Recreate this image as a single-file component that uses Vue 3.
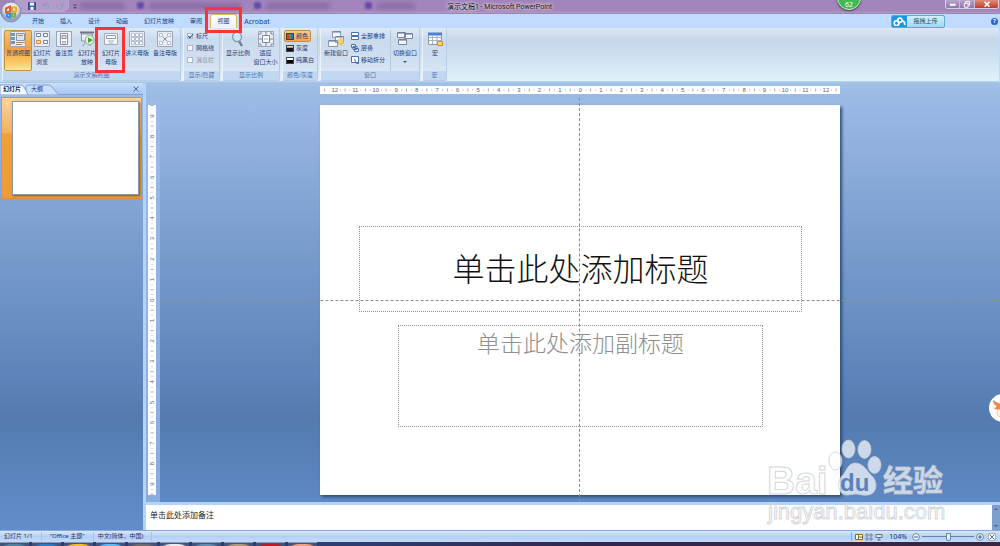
<script setup>
import { ref } from 'vue'

const tabs = ['开始', '插入', '设计', '动画', '幻灯片放映', '审阅', '视图', 'Acrobat']
const activeTab = ref('视图')

const G = '#8793a8'
const frame = { d: 'M.5.5h15v15H.5z', f: '#e9edf3', s: '#9aa5b8' }
const icons = {
  normal: [
    frame,
    { d: 'M1 2h4v3H1zM1 6h4v3H1zM1 10h4v3H1z', f: '#7d93b4' },
    { d: 'M6.5 2.5h8v7h-8z', f: '#dde3ec', s: '#8a93a4' },
    { d: 'M8 4.5h5M6 11.5h9M6 13.5h6', s: '#b0895c' },
  ],
  sorter: [
    frame,
    { d: 'M2.5 2.5h4v3h-4zM9.5 2.5h4v3h-4zM9.5 9.5h4v3h-4z', f: '#fff', s: '#6f84a6' },
    { d: 'M2.5 9.5h4v3h-4z', f: '#fbe0b2', s: '#d98d35' },
  ],
  notes: [
    frame,
    { d: 'M4.5 2.5h7v11h-7z', f: '#fff', s: G },
    { d: 'M6 4.5h4v3H6z', f: '#dce3ee', s: G },
    { d: 'M6 10.5h4M6 12h4', s: '#9aa5b6' },
  ],
  show: [
    { d: 'M1 1.5h14', s: '#6b7585', w: 2 },
    { d: 'M2.5 3h11v7h-11zM7 10l-3 5M8 10l3 5', f: '#eef1f6', s: '#8c95a3' },
    { d: 'M10.500 4.500a4.500 4.500 0 1 0 .1 0z', f: '#e5f0e1', s: '#8ba28a' },
    { d: 'M9 6.500l5 2.500-5 3z', f: '#38a835' },
  ],
  master: [
    { d: 'M1.500 2.500h13v11h-13z', f: '#f2f4f8', s: '#a4acba' },
    { d: 'M3.500 4.500h9v3h-9z', f: '#fff', s: '#8d9bb3' },
    { d: 'M5 10h6M6 12h4', s: '#a9b2c1' },
  ],
  handout: [
    frame,
    { d: 'M2.500 2.500h3v3h-3zM6.500 2.500h3v3h-3zM10.500 2.500h3v3h-3zM2.500 6.500h3v3h-3zM6.500 6.500h3v3h-3zM10.500 6.500h3v3h-3zM2.500 10.500h3v3h-3zM6.500 10.500h3v3h-3zM10.500 10.500h3v3h-3z', f: '#fff', s: '#b4bdcb' },
  ],
  notesMaster: [
    frame,
    { d: 'M2.500 2.500h3v3h-3zM10.500 2.500h3v3h-3zM2.500 10.500h3v3h-3zM10.500 10.500h3v3h-3z', f: '#fff', s: '#b4bdcb' },
    { d: 'M6 6l4 4M10 6l-4 4', s: '#8491a6' },
  ],
  zoom: [
    { d: 'M9 10l3 5', s: '#707c92', w: 2.4 },
    { d: 'M7 1a4.500 4.800 0 1 0 .1 0z', f: '#cfe4f8', s: '#8796ae', w: 1.3 },
    { d: 'M5 4q1-2 3-1', s: '#fff' },
  ],
  fit: [
    frame,
    { d: 'M4.500 4.500h7v7h-7z', f: '#fff', s: '#7a879d' },
    { d: 'M8 1v3M8 12v3M1 8h3M12 8h3M2 4V2h2M12 2h2v2M14 12v2h-2M4 14H2v-2', s: '#7a879d' },
    { d: 'M6 8h4', s: '#9fadc4' },
  ],
  newWindow: [
    { d: 'M4.500.500h8v6h-8z', f: '#f7f9fc', s: '#8c97a8' },
    { d: 'M4.500 1h8M7 6h8', s: '#5479b2' },
    { d: 'M7.500 5.500h8v6h-8zM.500 9.500h9v6H.500z', f: '#f7f9fc', s: '#8c97a8' },
    { d: 'M1 10h8M8 6h7', s: '#5479b2' },
    { d: 'M13 6.500l1 2.500 2-.5-1 2 1 2-2-.5-1 2.500-1-2.500-2 .5 1-2-1-2 2 .5z', f: '#ffd75a', s: '#e0a52c', w: .5 },
  ],
  switchWindow: [
    { d: 'M.500 1.500h8v5h-8zM7.500 2.500h8v5h-8zM1.500 8.500h8v5h-8z', f: '#f5f7fb', s: '#78869c' },
    { d: 'M1 2h7M8 3h7M2 9h7', s: '#5d7296' },
  ],
  macro: [
    { d: 'M1.500 2.500h13v11h-13z', f: '#f7f9fc', s: '#8c97a8' },
    { d: 'M1 3h14', s: '#4f7fd0', w: 3 },
    { d: 'M2 6.500h12M2 9.500h12M5.500 5v8M10 5v8', s: '#a8b2c4' },
    { d: 'M10.500 10.500h5v4h-5z', f: '#ffd36b', s: '#c69227' },
  ],
}

const viewButtons = [
  { icon: 'normal', lines: ['普通视图'], on: true },
  { icon: 'sorter', lines: ['幻灯片', '浏览'] },
  { icon: 'notes', lines: ['备注页'] },
  { icon: 'show', lines: ['幻灯片', '放映'] },
  { icon: 'master', lines: ['幻灯片', '母版'], marked: true },
  { icon: 'handout', lines: ['讲义母版'] },
  { icon: 'notesMaster', lines: ['备注母版'] },
]
const zoomButtons = [
  { icon: 'zoom', lines: ['显示比例'] },
  { icon: 'fit', lines: ['适应', '窗口大小'] },
]
const checks = [
  { id: 'ruler', label: '标尺', on: true },
  { id: 'grid', label: '网格线' },
  { id: 'messages', label: '消息栏', off: true },
]
const modes = [
  { id: 'color', label: '颜色' },
  { id: 'gray', label: '灰度' },
  { id: 'mono', label: '纯黑白' },
]
const arrange = [
  { label: '全部重排', d: 'M.5.5h7v3h-7zM.5 4.500h7v3h-7z' },
  { label: '层叠', d: 'M.5.5h4v3h-4zM2 2.500h4v3H2zM3.500 4.500h4v3h-4z' },
  { label: '移动拆分', d: 'M.5.5h7v6h-7zM3.500 3l2 4.500M5.500 7.500h2v-2' },
]

const STEP = 20.5
const hMarks = Array.from({ length: 25 }, (_, i) => ({ n: Math.abs(i - 12), at: 260.5 + (i - 12) * STEP }))
const vMarks = Array.from({ length: 19 }, (_, i) => ({ n: Math.abs(i - 9), at: 195.5 + (i - 9) * STEP }))
const notes = ref('单击此处添加备注')
const zoom = ref(50)
const tasks = ['#51809f', '#2b7cc4', '#f2bc2d', '#5ebcf2', '#6d6b70', '#e8ecef', '#648bb0', '#b19a77', '#c31722', '#f2a083']
</script>

<template>
  <div class="app">
    <header class="titlebar">
      <div class="quick">
        <button class="qbtn" aria-label="保存">
          <svg viewBox="0 0 8 8"><path d="M.5.5h7v7h-7z" fill="#4a63b5" stroke="#334790" /><path d="M2 .5h4v3H2zM2.500 5h3v3h-3z" fill="#f2f5fc" /></svg>
        </button>
        <button class="qbtn dim" aria-label="撤消">
          <svg viewBox="0 0 8 8"><path d="M1 1v3h3M1 4q2-3 5-1.500Q8 5 5 7" fill="none" stroke="#8292bd" /></svg>
        </button>
        <button class="qbtn dim" aria-label="恢复">
          <svg viewBox="0 0 8 8"><path d="M7 0v3H4M6.500 3Q7 7 3.500 7 0 6 1 2" fill="none" stroke="#8292bd" /></svg>
        </button>
      </div>
      <button class="more" aria-label="自定义"><svg viewBox="0 0 6 6"><path d="M1 1h4" stroke="#514772" /><path d="M1 3h4L3 5z" fill="#514772" /></svg></button>
      <div class="behind"><i class="smear a"></i><i class="dot"></i><i class="smear b"></i><i class="dot"></i><i class="smear c"></i><i class="dot"></i><i class="smear d"></i></div>
      <h1>演示文稿1 - Microsoft PowerPoint</h1>
      <span class="badge">62</span>
      <div class="window-buttons">
        <button aria-label="最小化"><svg viewBox="0 0 14 9"><path d="M4 5h6" stroke="#fff" stroke-width="2" /></svg></button>
        <button aria-label="还原"><svg viewBox="0 0 14 9"><path d="M4.500 3.500h4v4h-4zM6 3V1.500h4v4H9" fill="none" stroke="#fff" /></svg></button>
        <button class="close" aria-label="关闭"><svg viewBox="0 0 24 9"><path d="M10 2l5 5M15 2l-5 5" stroke="#fff" stroke-width="1.700" /></svg></button>
      </div>
    </header>

    <button class="office" aria-label="Office">
      <svg viewBox="0 0 22 22">
        <defs><radialGradient id="orb" cy=".35"><stop offset="0" stop-color="#fff" /><stop offset=".7" stop-color="#dce0ea" /><stop offset="1" stop-color="#98a3bd" /></radialGradient></defs>
        <circle cx="11" cy="11" r="10" fill="url(#orb)" stroke="#8590b0" />
        <g fill="none" stroke-width="2">
          <path d="M6 7.500l4-2v5l-4 1z" stroke="#e5601f" />
          <path d="M12 6.500h4v4h-4z" stroke="#f3a42c" />
          <path d="M7 13l3-.5v4l-3-1z" stroke="#4d8bd6" />
          <path d="M12 12.500h3v3h-3z" stroke="#72b43c" />
        </g>
      </svg>
    </button>

    <nav class="tabs">
      <button v-for="t in tabs" :key="t" :class="['tab', { active: t === activeTab }]" @click="activeTab = t">{{ t }}</button>
      <div class="tab-tools">
        <button class="upload"><span class="cloud"><svg viewBox="0 0 12 9"><g fill="none" stroke="#fff" stroke-width="1.500"><circle cx="3.300" cy="5.700" r="2.200" /><circle cx="6.300" cy="3" r="2" /><path d="M8.300 3.500q3 .5 2.500 4" /></g></svg></span><span class="upload-text">拖拽上传</span></button>
        <button class="help" aria-label="帮助">?</button>
      </div>
    </nav>

    <section class="ribbon">
      <div class="group">
        <div class="body views">
          <button v-for="b in viewButtons" :key="b.lines[0] + b.icon" :class="['big', { on: b.on, marked: b.marked }]">
            <svg viewBox="0 0 16 16"><path v-for="(p, i) in icons[b.icon]" :key="i" :d="p.d" :fill="p.f || 'none'" :stroke="p.s || 'none'" :stroke-width="p.w || 1" /></svg>
            <span v-for="l in b.lines" :key="l">{{ l }}</span>
          </button>
        </div>
        <div class="caption">演示文稿视图</div>
      </div>
      <div class="group">
        <div class="body stack checks">
          <label v-for="c in checks" :key="c.id" :class="{ off: c.off }" :for="c.id"><input :id="c.id" type="checkbox" :checked="c.on" :disabled="c.off">{{ c.label }}</label>
        </div>
        <div class="caption">显示/隐藏</div>
      </div>
      <div class="group">
        <div class="body zooms">
          <button v-for="b in zoomButtons" :key="b.icon" class="big">
            <svg viewBox="0 0 16 16"><path v-for="(p, i) in icons[b.icon]" :key="i" :d="p.d" :fill="p.f || 'none'" :stroke="p.s || 'none'" :stroke-width="p.w || 1" /></svg>
            <span v-for="l in b.lines" :key="l">{{ l }}</span>
          </button>
        </div>
        <div class="caption">显示比例</div>
      </div>
      <div class="group">
        <div class="body stack modes">
          <button v-for="m in modes" :key="m.id" :class="['small', { on: m.id === 'color' }]"><i :class="['swatch', m.id]"></i>{{ m.label }}</button>
        </div>
        <div class="caption">颜色/灰度</div>
      </div>
      <div class="group">
        <div class="body windows">
          <button class="big">
            <svg viewBox="0 0 16 16"><path v-for="(p, i) in icons.newWindow" :key="i" :d="p.d" :fill="p.f || 'none'" :stroke="p.s || 'none'" :stroke-width="p.w || 1" /></svg>
            <span>新建窗口</span>
          </button>
          <div class="stack arrange">
            <button v-for="a in arrange" :key="a.label" class="small"><svg viewBox="0 0 8 8"><path :d="a.d" fill="#fff" stroke="#4b71b4" /></svg>{{ a.label }}</button>
          </div>
          <button class="big drop">
            <svg viewBox="0 0 16 16"><path v-for="(p, i) in icons.switchWindow" :key="i" :d="p.d" :fill="p.f || 'none'" :stroke="p.s || 'none'" /></svg>
            <span>切换窗口</span>
            <i class="caret"></i>
          </button>
        </div>
        <div class="caption">窗口</div>
      </div>
      <div class="group">
        <div class="body macros">
          <button class="big">
            <svg viewBox="0 0 16 16"><path v-for="(p, i) in icons.macro" :key="i" :d="p.d" :fill="p.f || 'none'" :stroke="p.s || 'none'" :stroke-width="p.w || 1" /></svg>
            <span>宏</span>
          </button>
        </div>
        <div class="caption">宏</div>
      </div>
    </section>

    <main class="work">
      <aside class="pane">
        <div class="pane-tabs">
          <svg class="pane-shape" viewBox="0 0 60 11"><path d="M26 11V3q0-2 2-2h22l9 10z" fill="#cbdffa" stroke="#7fa2d6" /><path d="M0 11V1h21q3 0 7 10z" fill="#f4f9ff" stroke="#7fa2d6" /></svg>
          <button class="ptab on">幻灯片</button>
          <button class="ptab">大纲</button>
          <button class="pclose" aria-label="关闭窗格"><svg viewBox="0 0 6 6"><path d="M.5.5l5 5M5.500.5l-5 5" stroke="#3f6db0" /></svg></button>
        </div>
        <div class="thumb"><span>1</span><div class="mini"></div></div>
      </aside>

      <div class="editor">
        <div class="hruler">
          <svg viewBox="0 0 521 8">
            <g v-for="m in hMarks" :key="m.at">
              <text :x="m.at" y="6">{{ m.n }}</text>
              <path :d="`M${m.at + 10.25} 2.500v3`" />
              <path :d="`M${m.at + 5.5} 3.500v1M${m.at + 15} 3.500v1`" />
            </g>
            <path d="M4.200 2.500v3" />
          </svg>
        </div>
        <div class="vruler">
          <svg viewBox="0 0 8 391">
            <g v-for="m in vMarks" :key="m.at">
              <text :transform="`translate(6 ${m.at}) rotate(-90)`">{{ m.n }}</text>
              <path :d="`M2.500 ${m.at + 10.25}h3`" />
              <path :d="`M3.500 ${m.at + 5.5}h1M3.500 ${m.at + 15}h1`" />
            </g>
            <path d="M2.500 .5h3" />
          </svg>
        </div>
        <div class="stage">
          <div class="slide">
            <div class="holder title">单击此处添加标题</div>
            <div class="holder subtitle">单击此处添加副标题</div>
          </div>
          <i class="guide-h"></i>
          <i class="guide-v"></i>
        </div>
        <div class="notes">
          <textarea v-model="notes" aria-label="备注"></textarea>
          <div class="scroll"><svg viewBox="0 0 8 8"><path d="M2 5l2-2 2 2z" fill="#46659b" /></svg><svg viewBox="0 0 8 8"><path d="M2 3l2 2 2-2z" fill="#46659b" /></svg></div>
        </div>
      </div>
    </main>

    <footer class="status">
      <span>幻灯片 1/1</span><span>"Office 主题"</span><span>中文(简体，中国)</span>
      <div class="status-right">
        <button class="vbtn on" aria-label="普通视图"><svg viewBox="0 0 8 8"><path d="M.5 1.500h7v5h-7zM3.500 1v5M4 4h3" fill="#fff" stroke="#8a6a34" /></svg></button>
        <button class="vbtn" aria-label="浏览视图"><svg viewBox="0 0 8 8"><path d="M1 1h2v2H1zM5 1h2v2H5zM1 5h2v2H1zM5 5h2v2H5z" fill="#fff" stroke="#6b7d9e" /></svg></button>
        <button class="vbtn" aria-label="放映"><svg viewBox="0 0 8 8"><path d="M1 1.500h6v3H1zM4 5v2M2.500 7h3" fill="#dfe6f2" stroke="#65728b" /></svg></button>
        <span class="pct">104%</span>
        <button class="round" aria-label="缩小"><svg viewBox="0 0 8 8"><circle cx="4" cy="4" r="3.400" fill="#f2f7ff" stroke="#6582b5" /><path d="M2 4h4" stroke="#3d5b94" /></svg></button>
        <input v-model="zoom" type="range" aria-label="显示比例">
        <button class="round" aria-label="放大"><svg viewBox="0 0 8 8"><circle cx="4" cy="4" r="3.400" fill="#f2f7ff" stroke="#6582b5" /><path d="M2 4h4M4 2v4" stroke="#3d5b94" /></svg></button>
        <button class="round fitwin" aria-label="适应窗口"><svg viewBox="0 0 8 8"><path d="M.5.5h7v7h-7z" fill="#f4f7fc" stroke="#a4b2cb" /><path d="M1.500 1.500l5 5M6.500 1.500l-5 5" stroke="#5d6f91" /></svg></button>
      </div>
    </footer>
    <div class="taskbar"><i v-for="c in tasks" :key="c" :style="{ '--tone': c }"></i></div>

    <div class="pet"><svg viewBox="0 0 28 30"><circle cx="14" cy="15" r="14" fill="#fff" /><path d="M4 7q0 5 4 6l-3 3 5 1-1 3 10-1V9l-7 2Q8 10 4 7z" fill="#f18441" /><circle cx="12" cy="20" r="4" fill="#fff3df" stroke="#f3cf99" /></svg></div>

    <svg class="watermark" viewBox="0 0 184 92">
      <g class="soft">
        <text class="bai" x="2" y="59">Bai</text>
        <ellipse cx="70.500" cy="26" rx="6.500" ry="9" />
        <ellipse cx="83.500" cy="14" rx="6.500" ry="9" />
        <ellipse cx="99.500" cy="14.500" rx="6.500" ry="9" />
        <ellipse cx="109.500" cy="30" rx="6.500" ry="8.500" />
        <path d="M90 28c-7 0-9 9-13 13-5 5-5 19 5 19 4 0 6-1 9-1s7 2 12 1c9-1 10-12 5-18C102 37 99 28 90 28z" />
        <text class="jy" x="118" y="56">经验</text>
        <text class="url" x="3" y="84">jingyan.baidu.com</text>
      </g>
      <text class="du" x="75" y="56">du</text>
    </svg>
  </div>
</template>

<style>
html, body, #app { height: 100%; }
body { margin: 0; overflow: hidden; }
</style>

<style scoped>
* { box-sizing: border-box; }
.app { position: relative; height: 100%; display: flex; flex-direction: column; overflow: hidden; background: #bfdbff; color: #1c3b78; font: 6px/9px "Noto Sans", "Noto Sans CJK SC", sans-serif; }
button, input, textarea { font: inherit; color: inherit; padding: 0; margin: 0; border: 0; background: none; }
button { display: block; white-space: nowrap; }
svg { display: block; }

.titlebar { flex: none; position: relative; height: 14px; display: flex; align-items: flex-start; background: linear-gradient(#a184bc, #a385bb 85%, #b59cc6); border-bottom: 1px solid #9489a8; }
.quick { display: flex; gap: 6px; width: 54px; height: 12px; margin-left: 15px; padding: 2px 0 0 13px; border: 1px solid #b9a5cd; border-left: 0; border-top: 0; border-radius: 0 0 7px 0; background: #b29cca; }
.qbtn { width: 8px; height: 8px; }
.qbtn.dim { opacity: .7; }
.more { width: 6px; margin: 4px 0 0 3px; }
.behind { position: absolute; left: 80px; top: 2px; display: flex; align-items: center; gap: 5px; }
.smear { height: 6px; background: #6c4d8c; opacity: .45; filter: blur(2px); border-radius: 3px; }
.smear.a { width: 45px; margin-right: 7px; }
.smear.b { width: 92px; margin-right: 8px; }
.smear.c { width: 64px; margin-right: 30px; }
.smear.d { width: 38px; }
.dot { width: 7px; height: 7px; border-radius: 2px; background: #4e38a5; opacity: .75; filter: blur(1px); }
h1 { flex: 1; margin: 0; padding: 2px 24px 0 0; text-align: center; font-family: Roboto, "Noto Sans CJK SC", sans-serif; font-size: 7px; line-height: 10px; font-weight: 400; color: #17121f; text-shadow: 0 0 3px #fff, 0 0 4px #ddd; }
.badge { position: absolute; z-index: 2; left: 84.9%; top: -14px; width: 24px; height: 24px; margin-left: -12px; padding-top: 13px; text-align: center; border: 1px solid #d2e8d0; border-radius: 50%; background: #3fba54; color: #fff; font-size: 7px; line-height: 9px; box-shadow: 0 1px 2px #4a4356; }
.window-buttons { display: flex; width: 54px; height: 9px; margin-right: 1px; border: 1px solid #d9cde2; border-top: 0; border-radius: 0 0 3px 3px; overflow: hidden; }
.window-buttons button { flex: 14; background: linear-gradient(#baa5cb, #8f78a5); border-right: 1px solid #c9bad6; }
.window-buttons .close { flex: 24; border: 0; background: linear-gradient(#dc8d7d, #c43b22); }
.office { position: absolute; z-index: 3; left: 0; top: 1px; width: 22px; height: 22px; }

.tabs { flex: none; display: flex; height: 14px; padding-left: 24px; align-items: stretch; background: #bfdbff; }
.tab { position: relative; width: 28px; font-size: 6px; color: #15428b; display: flex; justify-content: center; align-items: center; }
.tab:nth-child(5) { width: 46px; }
.tab:nth-child(6) { width: 28px; }
.tab:nth-child(8) { width: 34px; font-size: 7px; margin-left: 3px; }
.tab.active { width: 27px; background: linear-gradient(#fff, #eaf2fb); border: 1px solid #e0b85a; border-bottom: 0; border-radius: 3px 3px 0 0; }
.tab.active::after { content: ""; position: absolute; z-index: 4; inset: -8px -6px -5px; border: 3px solid #f73535; }
.tab-tools { margin-left: auto; display: flex; align-items: center; }
.upload { display: flex; width: 54px; height: 13px; margin-right: 46px; border: 1px solid #5fa9d8; border-radius: 2px; overflow: hidden; background: linear-gradient(#d2effc, #a0d8f4); }
.cloud { width: 15px; padding: 1px; background: #1996e4; }
.upload-text { flex: 1; line-height: 11px; color: #28536d; }
.help { width: 7px; height: 7px; margin-right: 2px; border-radius: 50%; background: #2d64c8; color: #fff; font-size: 6px; line-height: 7px; font-weight: 700; }

.ribbon { flex: none; display: flex; gap: 2px; height: 54px; margin: 0 1px 0 2px; background: linear-gradient(#dde7f4, #c8d8ec 20%, #cbdcee 45%, #e1f2fc); border-bottom: 1px solid #b4d2e9; border-radius: 2px; }
.group { position: relative; display: flex; flex-direction: column; border: 1px solid #b6cce6; border-left-color: #eaf3fc; border-top: 0; border-radius: 2px; background: linear-gradient(#dfe9f5, #cbdbee 22%, #cfdef0 60%, #deebf8); }
.body { flex: 1; display: grid; padding: 2px 0 0 1px; }
.caption { height: 9px; background: #c1d8f0; color: #4e74ae; text-align: center; line-height: 9px; }
.views { grid-template-columns: 28px 20px 24px 22px 26px 26px 30px; }
.zooms { grid-template-columns: 28px 27px; }
.windows { grid-template-columns: 28px 41px 28px; }
.macros { grid-template-columns: 22px; }
.big { position: relative; display: flex; flex-direction: column; align-items: center; justify-content: flex-start; height: 41px; padding-top: 1px; }
.big svg { width: 16px; height: 16px; margin-bottom: 2px; }
.big.on { border: 1px solid #c58f3f; padding-top: 0; border-radius: 2px; background: linear-gradient(#f7c075, #f5a03c 45%, #fcd576 90%, #ffe79a); }
.marked::after { content: ""; position: absolute; z-index: 4; inset: -3px -1px -2px -3px; border: 3px solid #f73535; }
.stack { display: flex; flex-direction: column; }
.checks { width: 35px; padding: 2px 0 0 3px; }
.checks label { display: flex; align-items: center; gap: 3px; height: 12px; white-space: nowrap; }
.checks label.off { color: #8c96a5; }
.checks input { position: relative; appearance: none; width: 6px; height: 6px; border: 1px solid #abb9cb; background: #f5f8fb; }
.checks input:checked::after { content: ""; position: absolute; left: 1px; top: -1px; width: 2px; height: 4px; border: solid #2b4a83; border-width: 0 1px 1px 0; transform: rotate(40deg); }
.modes { width: 34px; }
.small { display: flex; align-items: center; gap: 2px; height: 12px; padding-left: 1px; }
.modes .small { width: 27px; border: 1px solid transparent; }
.modes .small.on { border-color: #c58f3f; border-radius: 2px; background: linear-gradient(#f9c987, #f4a94a); }
.small svg { width: 8px; height: 8px; }
.swatch { flex: none; width: 8px; height: 7px; border: 1px solid #3c4350; }
.swatch.color { background: linear-gradient(90deg, #d83b2a 35%, #3aa24a 35% 65%, #2d6ed0 65%); }
.swatch.gray { background: linear-gradient(#f1f1f1, #777 45%, #111 50%); }
.swatch.mono { background: linear-gradient(#fff 45%, #000 45%); }
.arrange { border-right: 1px solid #b4c8df; }
.caret { margin-top: 3px; border: 2px solid transparent; border-top-color: #33548f; }

.work { flex: 1; min-height: 0; display: flex; border-top: 1px solid #a5c4e6; background: linear-gradient(#9fbde7, #82a3d3 28%, #5c84ba 66%, #537bb0 75%, #628dca); }
.pane { flex: none; width: 143px; }
.pane-tabs { position: relative; display: flex; align-items: center; height: 12px; padding: 0 4px 0 3px; background: linear-gradient(#c9dffb, #a9c6ee); border-bottom: 1px solid #7fa2d6; }
.pane-shape { position: absolute; left: 0; top: 1px; width: 60px; height: 11px; }
.ptab { position: relative; width: 28px; padding-top: 1px; text-align: left; color: #1b2f7b; }
.ptab.on { font-weight: 700; color: #101d5a; }
.pclose { margin-left: auto; width: 6px; height: 6px; }
.thumb { display: flex; height: 102px; margin: 2px 1px 0 1px; padding: 3px 2px 3px 4px; border: 1px solid #e08f40; border-radius: 1px; background: linear-gradient(#f9d3a0, #f4b15c 35%, #f0a037 36%, #ee9c36); }
.thumb span { width: 6px; color: #fff3dd; }
.mini { flex: 1; background: #fff; border: 1px solid #8b98a8; box-shadow: 1px 1px 2px #7c5a24; }

.editor { flex: 1; min-width: 0; display: grid; grid-template: 15px minmax(0, 1fr) 28px / 14px minmax(0, 1fr); border-left: 3px solid #b4d3fb; }
.hruler { grid-column: 1 / 3; padding: 3px 0 0 14px; background: linear-gradient(#a3c0e6, #98b8e3); }
.hruler svg { width: 62%; margin: 0 auto; background: #fff; }
.vruler { padding: 7px 4px 7px 2px; background: linear-gradient(#9bbae5, #8aacdb); }
.vruler svg { width: 8px; height: 100%; background: #fff; }
.hruler text, .vruler text { font: 6px "Liberation Sans", sans-serif; fill: #5a6473; text-anchor: middle; }
.hruler path, .vruler path { stroke: #a3abb8; stroke-width: 1; fill: none; }
.stage { position: relative; display: flex; justify-content: center; align-items: center; overflow: hidden; }
.slide { position: relative; width: 62%; aspect-ratio: 4 / 3; background: #fff; box-shadow: 2px 2px 3px #2f4b76; }
.holder { position: absolute; border: 1px dotted #8f8f8f; text-align: center; font-family: "Noto Sans CJK SC", sans-serif; font-weight: 300; white-space: nowrap; }
.title { left: 7.500%; top: 31%; width: 85.200%; height: 22%; padding-bottom: 4px; display: flex; align-items: center; justify-content: center; font-size: 32px; line-height: 40px; color: #111; }
.subtitle { left: 15%; top: 56.500%; width: 70.200%; height: 26%; font-size: 23px; line-height: 32px; color: #8f8f8f; }
.guide-h { position: absolute; left: 0; right: 0; top: 50%; border-top: 1px dashed #8c8c8c; }
.guide-v { position: absolute; top: 0; bottom: 0; left: 50%; border-left: 1px dashed #8c8c8c; margin-left: -1px; }
.notes { grid-column: 1 / 3; display: flex; border-top: 3px solid #b4d3fb; background: #fff; }
.notes textarea { flex: 1; resize: none; outline: 0; padding: 4px; font-size: 8px; line-height: 12px; color: #222; }
.scroll { width: 8px; display: flex; flex-direction: column; justify-content: space-between; background: #7f9fcb; }

.status { flex: none; display: flex; align-items: center; height: 12px; background: linear-gradient(#d8e8fd, #b5d0f5 50%, #c3dafa); border-top: 1px solid #88a9d8; color: #1c2f66; }
.status > span { padding: 0 8px 0 4px; border-right: 1px solid #a6c1e8; }
.status > span:nth-child(2) { padding-left: 8px; }
.status > span:nth-child(3) { padding-left: 4px; }
.status-right { display: flex; align-items: center; margin-left: auto; gap: 2px; padding: 0 4px 0 3px; border-left: 1px solid #8cabd9; }
.vbtn { width: 8px; height: 8px; }
.vbtn svg { width: 8px; height: 8px; }
.vbtn.on { background: #ffcf75; }
.pct { margin: 0 3px 0 4px; font-size: 7px; }
.round { width: 8px; height: 8px; }
.fitwin { margin-left: 2px; }
input[type=range] { appearance: none; width: 52px; height: 8px; background: linear-gradient(#6582b5, #6582b5) center / 100% 1px no-repeat; }
input[type=range]::-webkit-slider-thumb { appearance: none; width: 5px; height: 8px; border: 1px solid #6582b5; border-radius: 1px 1px 3px 3px; background: #eaf2ff; }
.taskbar { flex: none; height: 4px; display: flex; gap: 3px; background: linear-gradient(90deg, #233d76, #2e3e70 35%, #33264e 60%, #3b2540); }
.taskbar i { width: 29px; border-top: 1px solid #8e9bb8; background: radial-gradient(ellipse at bottom, var(--tone) 40%, #42527d 60%); }

.pet { position: absolute; z-index: 3; right: -17px; top: 393px; width: 28px; }
.watermark { position: absolute; z-index: 3; left: 765px; top: 435px; width: 184px; height: 92px; }
.soft { fill: rgba(255, 255, 255, .7); stroke: rgba(196, 200, 208, .75); stroke-width: 1; }
.bai { font: 700 39px "Liberation Sans", sans-serif; }
.du { font: 700 24px "Liberation Sans", sans-serif; fill: #5a82ba; }
.jy { font: 700 30px "Noto Sans CJK SC", sans-serif; }
.url { font: 22px "Liberation Sans", sans-serif; }
</style>
